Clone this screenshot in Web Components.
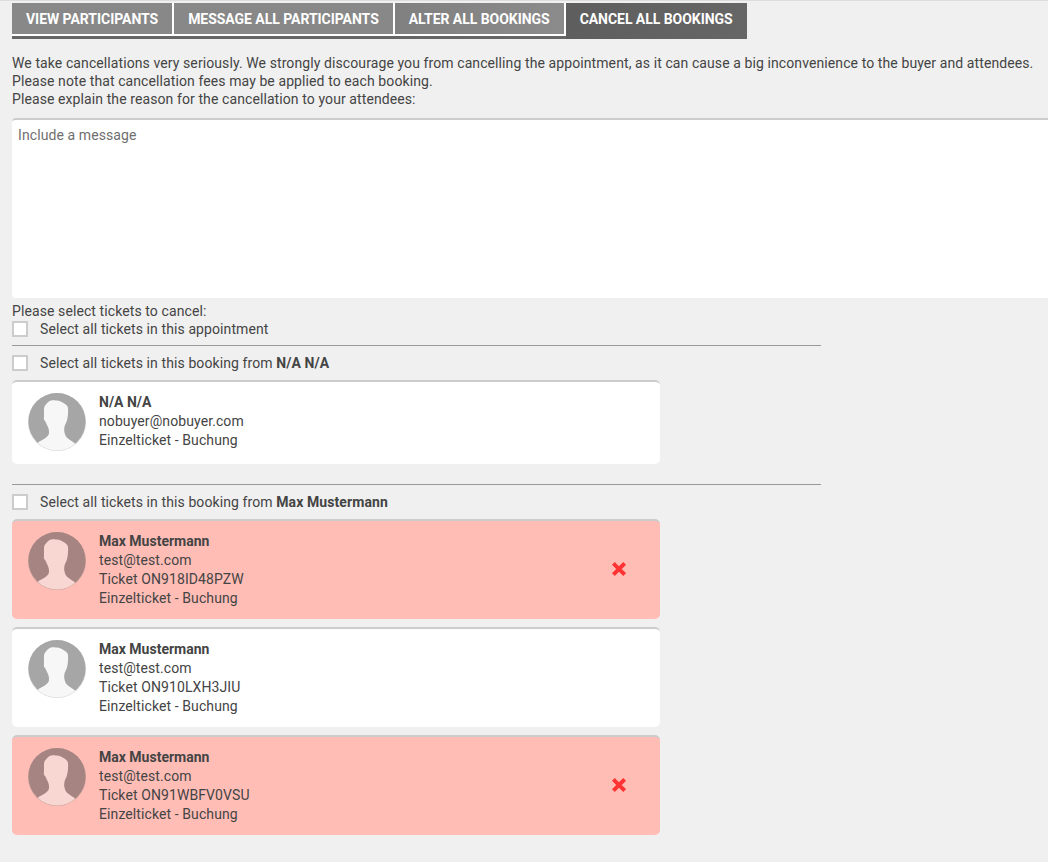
<!DOCTYPE html>
<html><head><meta charset="utf-8"><style>
html,body{margin:0;padding:0;background:#f0f0f0;overflow:hidden;height:862px}
body{font:14px/18px Roboto,sans-serif;color:#444;letter-spacing:.095px}
b{letter-spacing:0}
</style></head><body>
<cancel-page></cancel-page>
<template id="tpl-tabs"><style>
:host{display:flex;align-items:flex-start;height:36px;margin-left:12px;width:fit-content;background:linear-gradient(#0000 33px,#666 33px,#666 36px)}
</style><slot></slot></template>
<template id="tpl-tab"><style>
:host{display:block;box-sizing:content-box;height:31px;padding:0 14px;background:#888;color:#fff;font:700 14px/32px Roboto,sans-serif;letter-spacing:-.045px;white-space:nowrap;border-right:2px solid #fff;border-bottom:2px solid #fff}
:host([grad]){background:linear-gradient(90deg,#808080,#8b8b8b)}
:host([active]){height:36px;background:linear-gradient(90deg,#5e5e5e,#666);border:0}
</style><slot></slot></template>
<template id="tpl-check"><style>
:host{display:flex;align-items:center;height:18px;color:#444}
i{display:block;box-sizing:border-box;width:16px;height:16px;background:#fff;border:2px solid #ccc;margin-right:12px}
</style><i></i><span><slot></slot></span></template>
<template id="tpl-card"><style>
:host{display:block;box-sizing:border-box;width:648px;background:#fff;border-top:2px solid #ccc;border-radius:5px;padding:11px 16px 11px;position:relative;margin-bottom:8px;--disc:#a6a6a6;--fig:#f7f7f7;--rim:#d2d2d2}
:host([cancelled]){background:#ffbdb6;--disc:#a68481;--fig:#f8d6d2;--rim:#c79f9b}
.row{display:flex;align-items:flex-start}
.av{width:58px;height:58px;flex:none;margin:0 13px 2px 0}
svg{display:block}
.t{line-height:19px}
.n{font-weight:700;letter-spacing:0}
.x{position:absolute;right:33px;top:40px;display:none}
:host([cancelled]) .x{display:block}
</style><div class="row"><div class="av"><svg width="58" height="58" viewBox="0 0 58 58"><defs><clipPath id="c"><circle cx="29" cy="29" r="28.500"/></clipPath></defs><circle cx="29" cy="29" r="29" fill="var(--rim)"/><circle cx="29" cy="28.500" r="28.500" fill="var(--disc)"/><path clip-path="url(#c)" fill="var(--fig)" d="M23 7.500C27 7 32 7.500 35.500 10C38.500 11.500 40 13 40 15.500C40.300 19 40 22 39.500 25C39 28 38 30 37 32C36.300 34 36 36 36.300 38.500C36.800 42 38 44 40 45.500C42 47.500 45 48.500 47 50.500L52 58L7 58L10.500 49C13 47.500 15.500 46.500 17.500 45C19.500 43.500 20.800 42 21 40C21.200 37 20.500 35 19.500 33C18.500 31 17.800 29.500 17.300 28.300C16.200 27.500 15.700 26 15.900 25C16.200 22 15.800 19 16 16C16.200 14 16.700 12.500 18 11.500C19.500 9.500 21 8 23 7.500Z"/></svg></div><div class="t"><div class="n"><slot name="name"></slot></div><slot></slot></div></div><svg class="x" width="16" height="16" viewBox="0 0 16 16"><path d="M3.800 3.800l8.400 8.400m0-8.400l-8.400 8.400" stroke="#f33" stroke-width="4" stroke-linecap="square"/></svg></template>
<template id="tpl-page"><style>
:host{display:block;position:relative;width:1048px;height:862px;box-sizing:border-box;border-top:1px solid #ddd;padding-top:2px;overflow:hidden}
.msg{margin:15px 0 0 12px;white-space:nowrap}
.area{box-sizing:border-box;margin:10px 0 0 12px;width:1060px;height:180px;background:#fff;border-top:2px solid #ccc;border-radius:4px 0 0 4px;padding:6px 6px;color:#6f6f6f}
.sel{margin:4px 0 0 12px}
hr{border:0;height:1px;background:#999;width:809px;margin:7px 0 8px 12px}
.g{margin-left:12px}
.g check-row{margin-bottom:8px}
.s2{margin-top:20px}
</style>
<tab-bar><tab-btn>VIEW PARTICIPANTS</tab-btn><tab-btn>MESSAGE ALL PARTICIPANTS</tab-btn><tab-btn grad>ALTER ALL BOOKINGS</tab-btn><tab-btn active>CANCEL ALL BOOKINGS</tab-btn></tab-bar>
<div class="msg">We take cancellations very seriously. We strongly discourage you from cancelling the appointment, as it can cause a big inconvenience to the buyer and attendees.<br>Please note that cancellation fees may be applied to each booking.<br>Please explain the reason for the cancellation to your attendees:</div>
<div class="area">Include a message</div>
<div class="sel">Please select tickets to cancel:<check-row>Select all tickets in this appointment</check-row></div>
<hr>
<div class="g"><check-row>Select all tickets in this booking from&nbsp;<b>N/A N/A</b></check-row>
<ticket-card><span slot="name">N/A N/A</span>nobuyer@nobuyer.com<br>Einzelticket - Buchung</ticket-card></div>
<hr class="s2">
<div class="g"><check-row>Select all tickets in this booking from&nbsp;<b>Max Mustermann</b></check-row>
<ticket-card cancelled><span slot="name">Max Mustermann</span>test@test.com<br>Ticket ON918ID48PZW<br>Einzelticket - Buchung</ticket-card>
<ticket-card><span slot="name">Max Mustermann</span>test@test.com<br>Ticket ON910LXH3JIU<br>Einzelticket - Buchung</ticket-card>
<ticket-card cancelled><span slot="name">Max Mustermann</span>test@test.com<br>Ticket ON91WBFV0VSU<br>Einzelticket - Buchung</ticket-card></div>
</template>
<script>
const def=(n,id)=>customElements.define(n,class extends HTMLElement{constructor(){super();this.attachShadow({mode:'open'}).append(document.getElementById(id).content.cloneNode(true))}});
def('tab-bar','tpl-tabs');def('tab-btn','tpl-tab');def('check-row','tpl-check');def('ticket-card','tpl-card');def('cancel-page','tpl-page');
</script>
</body></html>
